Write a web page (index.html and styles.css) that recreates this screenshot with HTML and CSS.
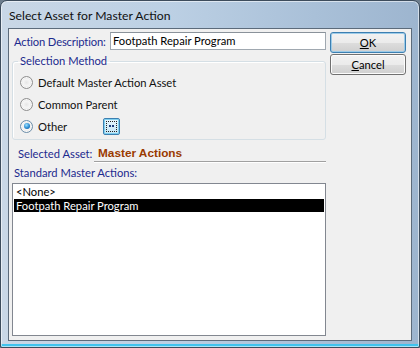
FILE: index.html
```html
<!DOCTYPE html>
<html>
<head>
<meta charset="utf-8">
<link rel="stylesheet" href="styles.css">
</head>
<body>
<div class="window">
  <div class="titlebar"><span class="title">Select Asset for Master Action</span></div>
  <div class="client">
    <div class="main">
      <div class="row-desc">
        <span class="label">Action Description:</span>
        <div class="textbox">Footpath Repair Program</div>
      </div>
      <fieldset class="group">
        <legend class="legend">Selection Method</legend>
        <div class="radio-row"><span class="radio"></span><span class="rlabel">Default Master Action Asset</span></div>
        <div class="radio-row"><span class="radio"></span><span class="rlabel">Common Parent</span></div>
        <div class="radio-row"><span class="radio checked"></span><span class="rlabel other">Other</span><span class="dots-btn"><span class="focus"><span class="dot"></span><span class="dot"></span></span></span></div>
      </fieldset>
      <div class="selected-row">
        <span class="label">Selected Asset:</span>
        <span class="asset">Master Actions</span>
      </div>
      <div class="rule"></div>
      <div class="label std">Standard Master Actions:</div>
      <div class="listbox">
        <div class="item">&lt;None&gt;</div>
        <div class="item sel">Footpath Repair Program</div>
      </div>
    </div>
    <div class="buttons">
      <div class="btn default"><span class="u">O</span>K</div>
      <div class="btn"><span class="u">C</span>ancel</div>
    </div>
  </div>
</div>
</body>
</html>
```
FILE: styles.css
```css
* { box-sizing: border-box; }
html, body { margin: 0; padding: 0; background: #6d7d8d; }
body { width: 420px; height: 348px; overflow: hidden; font-family: "Lato", sans-serif; font-size: 11.2px; white-space: nowrap; }
.window {
  width: 420px; height: 348px;
  border: 1px solid #3d4c5c;
  border-radius: 7px 7px 2px 2px;
  background: linear-gradient(90deg, #c9d7e6 0%, #bcd0e4 40%, #a9c0d8 75%, #9db5cf 100%);
  display: flex; flex-direction: column;
  box-shadow: inset 0 0 0 1px rgba(255,255,255,0.55), inset 0 -3px 0 #3fc3ee;
  padding: 0 7px 6px 7px;
}
.titlebar { height: 27px; display: flex; align-items: center; padding-left: 1px; padding-top: 1px; }
.title { font-family: "Lato", sans-serif; font-size: 12.2px; color: #101010; }
.client {
  flex: 1;
  background: #f0f0f0;
  border: 1px solid #5c6b7b;
  display: flex;
  padding: 3px 0 0 3px;
}
.main { width: 315px; display: flex; flex-direction: column; }
.label { color: #1c2a8e; }
.row-desc { display: flex; align-items: center; height: 18px; }
.row-desc .label { width: 98px; padding-left: 2px; letter-spacing: -0.15px; }
.textbox {
  width: 216px; height: 18px;
  background: #fff; border: 1px solid #a0a8b0;
  border-top-color: #8a929a;
  padding: 0 0 0 2px; line-height: 16px; color: #000;
}
.group {
  margin: 4px 1px 0 0; padding: 0 0 0 7px;
  border: 1px solid #d5dfe5; border-radius: 3px;
  height: 86px;
  box-shadow: inset 1px 1px 0 #fff;
}
.legend { color: #1c2a8e; padding: 0 3px 0 2px; margin-left: -2px; line-height: 14px; }
.radio-row { display: flex; align-items: center; height: 22px; }
.radio-row:first-of-type { margin-top: 3px; }
.radio {
  width: 13px; height: 13px; border-radius: 50%;
  border: 1px solid #8f8f8f;
  background: radial-gradient(circle at 50% 50%, #e6e6e6 0, #f6f6f6 45%, #dcdcdc 70%, #fafafa 100%);
  box-shadow: inset 0 0 0 1px #f8f8f8;
  position: relative;
}
.radio.checked { border-color: #6c8eaa; }
.radio.checked::after {
  content: ""; position: absolute; left: 2.5px; top: 2.5px; width: 6px; height: 6px; border-radius: 50%;
  background: radial-gradient(circle at 40% 35%, #9ce2ff 0, #2a8bd2 55%, #0b4f8c 100%);
}
.rlabel { margin-left: 5px; color: #111; }
.rlabel.other { width: 65px; }
.dots-btn {
  width: 17px; height: 17px; border: 1px solid #3c7fb1; border-radius: 2px;
  background: linear-gradient(#e8f6fd, #c4e5f6);
  box-shadow: inset 0 0 0 1px #7fd0f0;
  display: flex; align-items: center; justify-content: center;
}
.focus { width: 11px; height: 11px; border: 1px dotted #222; display: flex; align-items: center; justify-content: center; gap: 1px; }
.dot { width: 2px; height: 2px; background: #1d3c7c; }
.selected-row { display: flex; align-items: center; height: 16px; margin-top: 5px; padding-left: 6px; }
.selected-row .label { width: 80px; }
.asset { font-family: "Liberation Sans", sans-serif; font-weight: bold; font-size: 11.8px; color: #9a3a00; }
.rule { height: 2px; margin: 0 1px 0 82px; border-top: 1px solid #a0a0a0; border-bottom: 1px solid #fff; }
.std { padding-left: 2px; margin-top: 2px; height: 16px; line-height: 16px; }
.listbox {
  margin-top: 2px; width: 314px; height: 153px;
  background: #fff; border: 1px solid #828790;
  padding: 0 1px 0 1px;
}
.item { height: 14px; line-height: 14px; padding-left: 2px; color: #000; }
.item:first-child { margin-top: 1px; }
.item.sel { background: #000; color: #fff; height: 13px; line-height: 13px; }
.buttons { display: flex; flex-direction: column; gap: 1px; margin-left: 3px; }
.btn {
  width: 76px; height: 21px; border: 1px solid #707070; border-radius: 3px;
  background: linear-gradient(#f2f2f2 0%, #ebebeb 50%, #dddddd 51%, #cfcfcf 100%);
  box-shadow: inset 0 0 0 1px #fcfcfc;
  display: flex; align-items: center; justify-content: center; color: #000;
}
.btn.default { border-color: #3c7fb1; box-shadow: inset 0 0 0 1px #9ccbe8; }
.u { text-decoration: underline; }
```
